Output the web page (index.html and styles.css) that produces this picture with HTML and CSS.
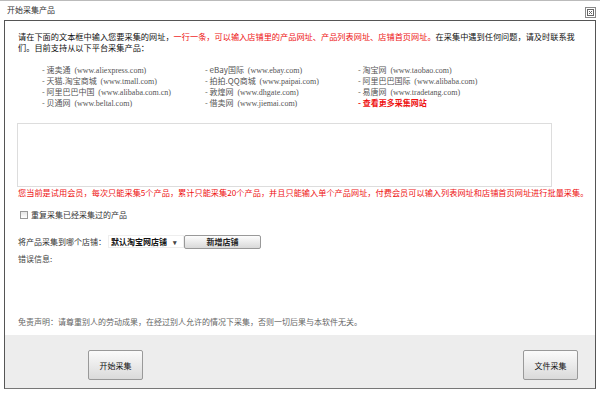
FILE: index.html
```html
<!DOCTYPE html>
<html lang="zh-CN">
<head>
    <meta charset="UTF-8">
    <title>开始采集产品</title>
    <link rel="stylesheet" href="styles.css">
</head>
<body>
    <div class="window">
        <div class="titlebar">
            <span class="title">开始采集产品</span>
            <span class="close">
                <svg width="7" height="7" viewBox="0 0 7 7"><rect x="0.5" y="0.5" width="6" height="6" fill="none" stroke="#666"/><path d="M2 2l3 3M5 2l-3 3" stroke="#666"/></svg>
            </span>
        </div>
        <div class="panel">
            <div class="content">
                <p class="intro">请在下面的文本框中输入您要采集的网址，<span class="red">一行一条，可以输入店铺里的产品网址、产品列表网址、店铺首页网址。</span>在采集中遇到任何问题，请及时联系我们。目前支持从以下平台采集产品：</p>

                <div class="sites">
                    <ul>
                        <li>- 速卖通 <span class="url">(www.aliexpress.com)</span></li>
                        <li>- 天猫.淘宝商城 <span class="url">(www.tmall.com)</span></li>
                        <li>- 阿里巴巴中国 <span class="url">(www.alibaba.com.cn)</span></li>
                        <li>- 贝通网 <span class="url">(www.beltal.com)</span></li>
                    </ul>
                    <ul>
                        <li>- eBay国际 <span class="url">(www.ebay.com)</span></li>
                        <li>- 拍拍.QQ商城 <span class="url">(www.paipai.com)</span></li>
                        <li>- 敦煌网 <span class="url">(www.dhgate.com)</span></li>
                        <li>- 借卖网 <span class="url">(www.jiemai.com)</span></li>
                    </ul>
                    <ul>
                        <li>- 淘宝网 <span class="url">(www.taobao.com)</span></li>
                        <li>- 阿里巴巴国际 <span class="url">(www.alibaba.com)</span></li>
                        <li>- 易唐网 <span class="url">(www.tradetang.com)</span></li>
                        <li class="more">- 查看更多采集网站</li>
                    </ul>
                </div>

                <textarea class="urls"></textarea>
                <p class="notice">您当前是试用会员，每次只能采集5个产品，累计只能采集20个产品，并且只能输入单个产品网址，付费会员可以输入列表网址和店铺首页网址进行批量采集。</p>

                <label class="check-row">
                    <span class="checkbox"></span>
                    <span>重复采集已经采集过的产品</span>
                </label>

                <div class="store-row">
                    <span>将产品采集到哪个店铺：</span>
                    <div class="select">默认淘宝网店铺 <span class="arrow">▾</span></div>
                    <button class="btn-small">新增店铺</button>
                </div>

                <p class="error">错误信息:</p>

                <p class="disclaimer">免责声明：请尊重别人的劳动成果，在经过别人允许的情况下采集，否则一切后果与本软件无关。</p>
            </div>
            <div class="footer">
                <button class="btn-big">开始采集</button>
                <button class="btn-big">文件采集</button>
            </div>
        </div>
    </div>
</body>
</html>
```

FILE: styles.css
```css
* {
    box-sizing: border-box;
    margin: 0;
    padding: 0;
}

body {
    font-family: "Noto Sans CJK SC", "Liberation Sans", sans-serif;
    font-size: 8px;
    color: #222;
    background: #fff;
}

.window {
    width: 600px;
    height: 393px;
    border-top: 1px solid #bbb;
    background: #fff;
}

.titlebar {
    height: 19px;
    display: flex;
    justify-content: space-between;
    padding: 0 4px 0 7px;
}

.title {
    line-height: 18px;
    color: #333;
}

.close {
    width: 11px;
    height: 11px;
    margin-top: 6px;
    border: 1px solid #888;
    display: flex;
    align-items: center;
    justify-content: center;
    background: #fff;
}

.panel {
    margin: 0 4px;
    height: 369px;
    border: 1px solid #555;
    display: flex;
    flex-direction: column;
    border-bottom: 1px solid #777;
}

.content {
    flex: 1;
    display: flex;
    flex-direction: column;
    align-items: flex-start;
    padding: 10px 13px 8px 13px;
}

.intro {
    width: 566px;
    font-size: 8.2px;
    line-height: 11px;
    color: #111;
}

.red {
    color: #ee1111;
}

.sites {
    display: flex;
    margin: 12px 0 0 24px;
    color: #555;
}

.sites ul {
    list-style: none;
    line-height: 10px;
}

.sites ul:nth-child(1) { width: 163px; }
.sites ul:nth-child(2) { width: 153px; }

.url {
    font-family: "Liberation Serif", serif;
    font-size: 8px;
    margin-left: 2px;
}

.more {
    color: #ee1111;
    font-weight: bold;
}

.urls {
    display: block;
    width: 535px;
    height: 64px;
    margin: 14px 0 0 -1px;
    border: 1px solid #ddd;
    resize: none;
    background: #fff;
}

.notice {
    font-size: 8.2px;
    line-height: 10px;
    color: #ee1111;
    white-space: nowrap;
}

.check-row {
    display: flex;
    align-items: center;
    gap: 3px;
    margin: 13px 0 0 2px;
    line-height: 10px;
    color: #333;
}

.checkbox {
    width: 8px;
    height: 8px;
    border: 1px solid #999;
    background: linear-gradient(#e6e6e6, #fff);
}

.store-row {
    display: flex;
    align-items: center;
    margin-top: 15px;
    height: 13px;
    color: #333;
}

.select {
    width: 76px;
    height: 13px;
    margin-left: 2px;
    padding-left: 2px;
    line-height: 12px;
    border: 1px solid #eee;
    color: #111;
    font-weight: bold;
}

.arrow {
    font-size: 7px;
    margin-left: 4px;
    color: #444;
}

.btn-small {
    width: 77px;
    height: 14px;
    margin-left: 0;
    font-family: inherit;
    font-size: 8px;
    font-weight: bold;
    color: #222;
    border: 1px solid #999;
    border-radius: 2px;
    background: linear-gradient(#fdfdfd, #d9d9d9);
}

.error {
    margin-top: 6px;
    line-height: 10px;
    color: #444;
}

.disclaimer {
    margin-top: auto;
    line-height: 10px;
    color: #666;
}

.footer {
    height: 53px;
    background: #ededed;
    display: flex;
    justify-content: space-between;
    align-items: flex-start;
    padding: 15px 17px 0 83px;
}

.btn-big {
    width: 55px;
    height: 30px;
    font-family: inherit;
    font-size: 8px;
    color: #111;
    border: 1px solid #999;
    border-radius: 2px;
    background: linear-gradient(#fbfbfb, #dadada);
}
```
